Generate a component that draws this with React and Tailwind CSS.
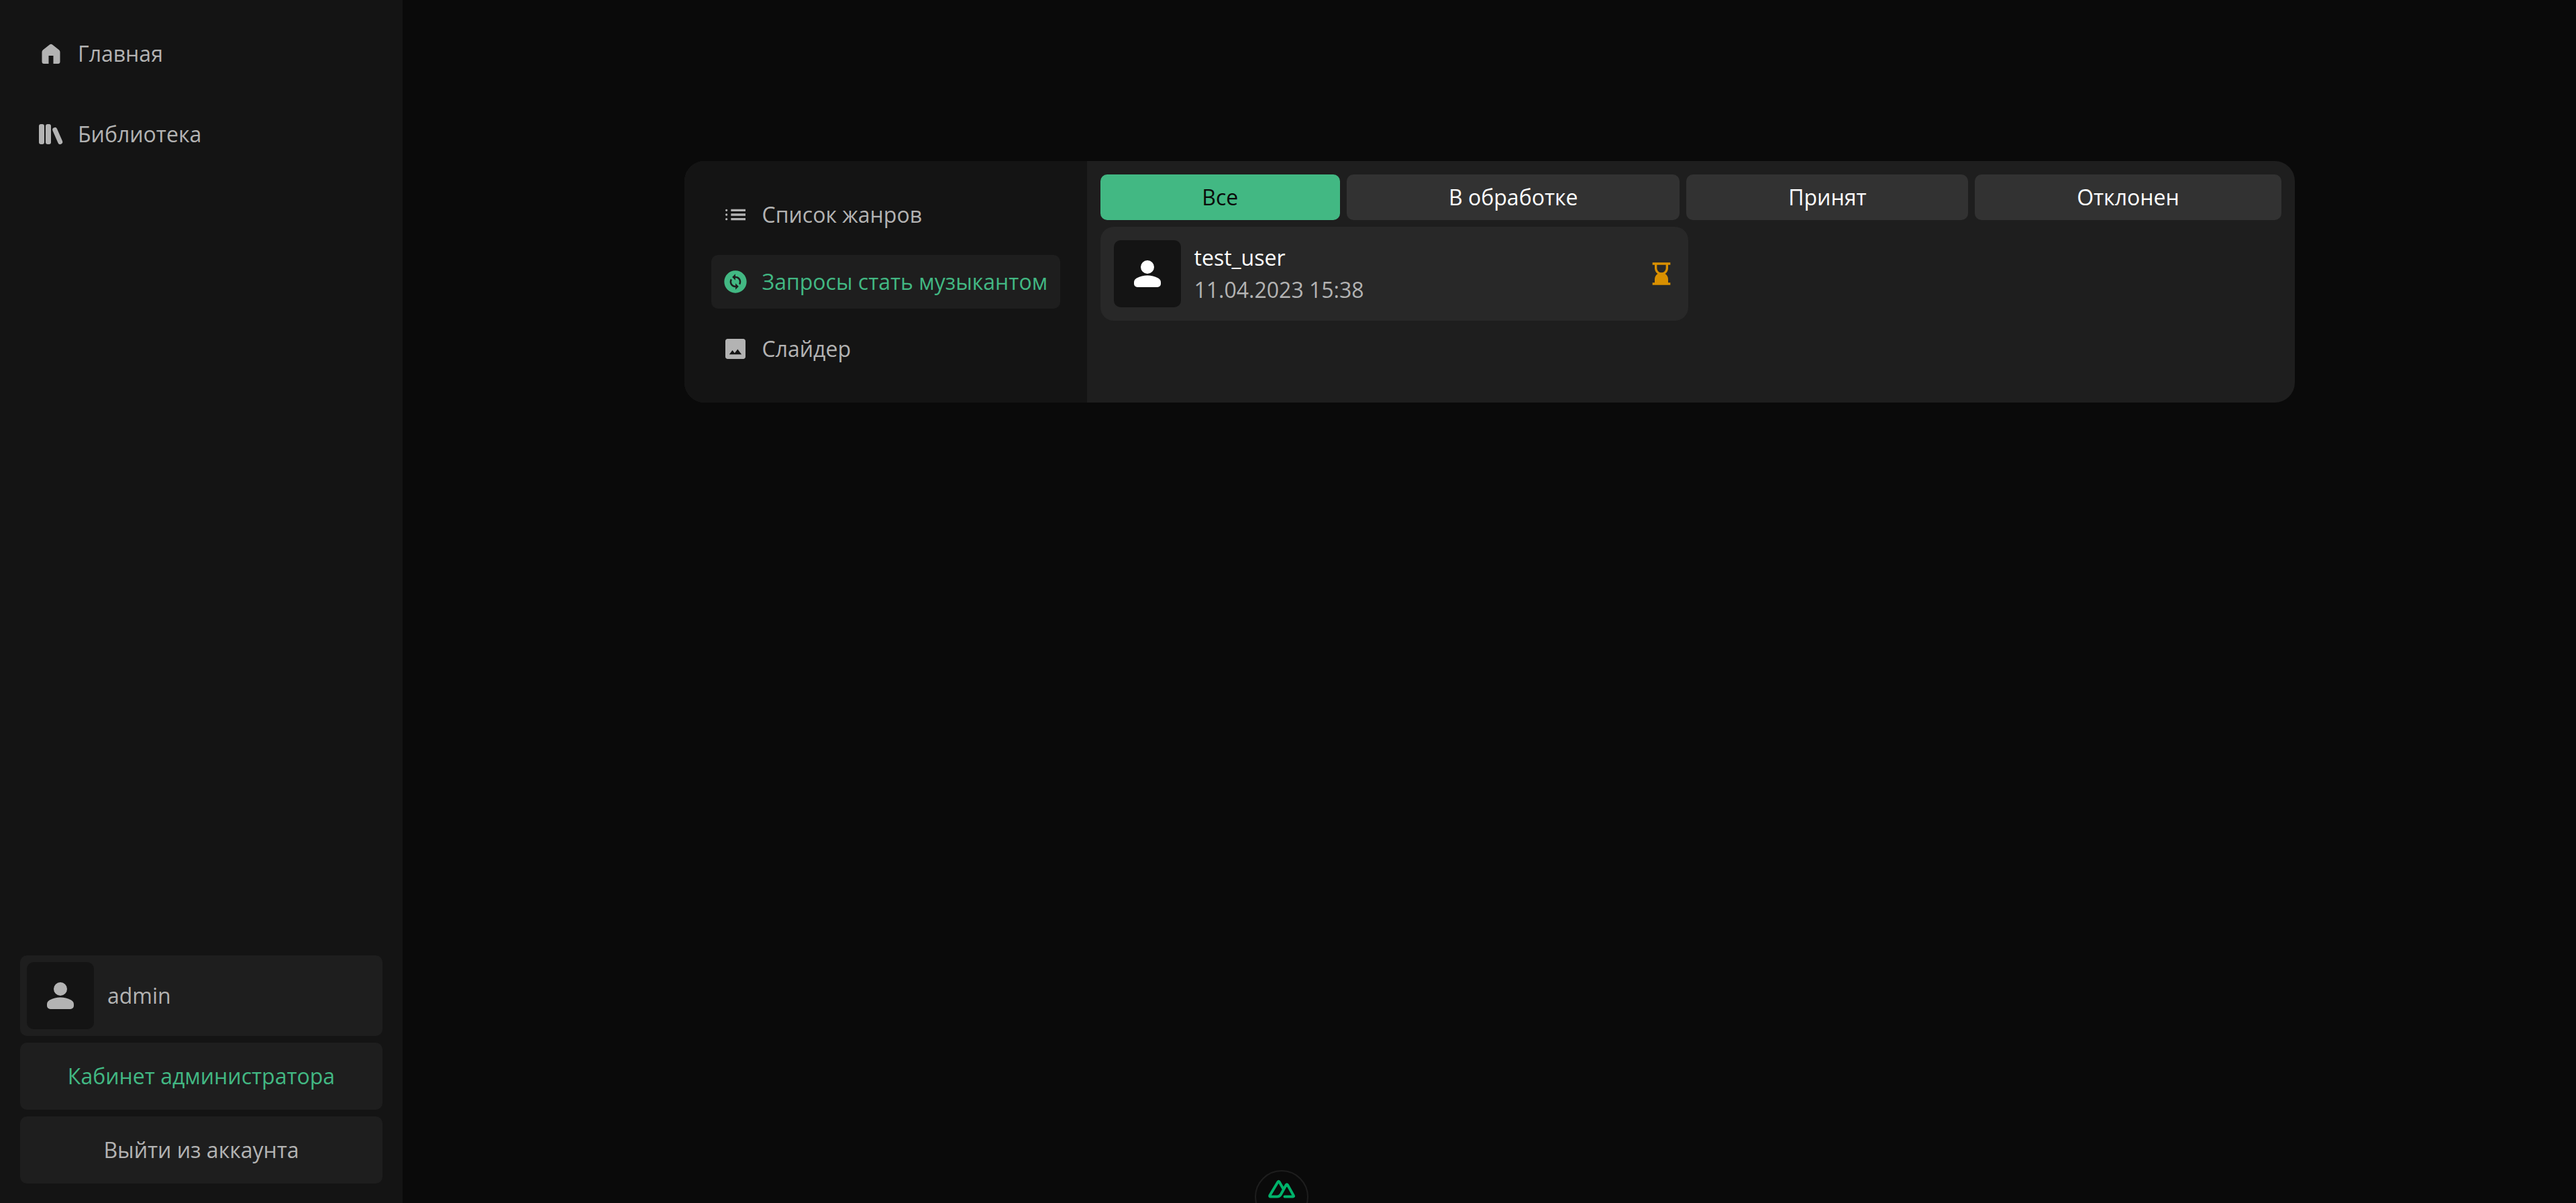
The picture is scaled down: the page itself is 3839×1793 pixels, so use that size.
import React from "react";

const Person = () => (
  <svg className="size-[60px]" viewBox="0 0 24 24" fill="currentColor" aria-hidden="true">
    <path d="M12 12q-1.650 0-2.825-1.175T8 8q0-1.650 1.175-2.825T12 4q1.650 0 2.825 1.175T16 8q0 1.650-1.175 2.825T12 12Zm-6 8q-.825 0-1.413-.588T4 18v-.8q0-.85.438-1.563T5.600 14.550q1.550-.775 3.150-1.163T12 13q1.650 0 3.250.388t3.150 1.162q.725.375 1.163 1.088T20 17.200v.8q0 .825-.588 1.413T18 20H6Z" />
  </svg>
);

const Home = () => (
  <svg className="size-10 shrink-0" viewBox="0 0 40 40" fill="currentColor" aria-hidden="true">
    <path d="M18 6.600a3.200 3.200 0 0 1 4 0l9.800 7.600a4 4 0 0 1 1.700 3.200V32a3 3 0 0 1-3 3h-7V23h-7v12h-7a3 3 0 0 1-3-3V17.400a4 4 0 0 1 1.700-3.200Z" />
  </svg>
);

const Library = () => (
  <svg className="size-10 shrink-0" viewBox="0 0 40 40" fill="currentColor" aria-hidden="true">
    <rect x="2" y="5" width="8" height="30" rx="3" />
    <rect x="12" y="5" width="8" height="30" rx="3" />
    <path d="M25.800 13.500 33.700 31.500" fill="none" stroke="currentColor" strokeWidth="7" strokeLinecap="round" />
  </svg>
);

const List = () => (
  <svg className="size-10 shrink-0" viewBox="0 0 24 24" fill="currentColor" aria-hidden="true">
    <path d="M8 9V7h13v2H8Zm0 4v-2h13v2H8Zm0 4v-2h13v2H8ZM4 9a1 1 0 1 1 0-2 1 1 0 0 1 0 2Zm0 4a1 1 0 1 1 0-2 1 1 0 0 1 0 2Zm0 4a1 1 0 1 1 0-2 1 1 0 0 1 0 2Z" />
  </svg>
);

const Change = () => (
  <svg className="size-10 shrink-0" viewBox="0 0 24 24" fill="currentColor" aria-hidden="true">
    <path d="M12 2C6.480 2 2 6.480 2 12s4.480 10 10 10 10-4.480 10-10S17.520 2 12 2zm.06 17v-2.010H12c-1.280 0-2.560-.49-3.540-1.460-1.710-1.710-1.920-4.350-.64-6.290l1.100 1.100c-.71 1.330-.53 3.010.59 4.130.7.700 1.620 1.030 2.540 1.010v-2.140l2.830 2.830L12.060 19zm4.110-4.240-1.100-1.100c.71-1.330.53-3.010-.59-4.130C13.790 8.840 12.900 8.500 12 8.500h-.06v2.150L9.110 7.830 11.940 5v2.020c1.300-.02 2.610.45 3.600 1.450 1.700 1.700 1.910 4.350.63 6.290z" />
  </svg>
);

const Picture = () => (
  <svg className="size-10 shrink-0" viewBox="0 0 24 24" fill="currentColor" aria-hidden="true">
    <path d="M5 21q-.825 0-1.413-.588T3 19V5q0-.825.588-1.413T5 3h14q.825 0 1.413.588T21 5v14q0 .825-.588 1.413T19 21H5Zm1.500-4h11l-3.500-4.700-2.700 3.400-2-2.500-2.800 3.800Z" />
  </svg>
);

const Hourglass = () => (
  <svg className="size-10 shrink-0 text-[#d99000]" viewBox="0 0 24 24" fill="currentColor" aria-hidden="true">
    <path d="M8 7q0 1.650 1.175 2.825T12 11q1.650 0 2.825-1.175T16 7V4H8v3ZM4 22v-2h2v-3q0-1.525.713-2.863T8.700 12q-1.275-.8-1.988-2.138T6 7V4H4V2h16v2h-2v3q0 1.525-.713 2.863T15.300 12q1.275.8 1.988 2.138T18 17v3h2v2H4Z" />
  </svg>
);

const navLinks = [
  { label: "Главная", Icon: Home },
  { label: "Библиотека", Icon: Library },
];

const sections = [
  { label: "Список жанров", Icon: List },
  { label: "Запросы стать музыкантом", Icon: Change, active: true },
  { label: "Слайдер", Icon: Picture },
];

const filters = ["Все", "В обработке", "Принят", "Отклонен"];

export default function App() {
  return (
    <div className="flex h-screen overflow-hidden bg-[#0a0a0a] font-['Open_Sans','Noto_Sans',sans-serif] text-[32px] leading-[44px] text-[#b3b3b3]">
      <aside className="flex w-[600px] shrink-0 flex-col justify-between bg-[#141414] px-[30px] pt-10 pb-[29px]">
        <nav className="flex flex-col gap-10">
          {navLinks.map(({ label, Icon }) => (
            <a key={label} href="#" className="flex h-20 items-center gap-5 px-[26px]">
              <Icon />
              {label}
            </a>
          ))}
        </nav>
        <div className="flex flex-col gap-[10px]">
          <a href="#" className="flex items-center gap-5 rounded-[10px] bg-[#1e1e1e] p-[10px]">
            <span className="flex size-[100px] items-center justify-center rounded-[10px] bg-[#141414]">
              <Person />
            </span>
            admin
          </a>
          <button type="button" className="h-[100px] rounded-[10px] bg-[#1e1e1e] text-[#42b883]">
            Кабинет администратора
          </button>
          <button type="button" className="h-[100px] rounded-[10px] bg-[#1e1e1e]">
            Выйти из аккаунта
          </button>
        </div>
      </aside>

      <main className="flex min-w-0 flex-1 items-start justify-center pt-60">
        <div className="flex w-full max-w-[2400px] overflow-hidden rounded-[30px] bg-[#1e1e1e]">
          <nav className="flex w-[600px] shrink-0 flex-col gap-5 bg-[#141414] p-10">
            {sections.map(({ label, Icon, active }) => (
              <a
                key={label}
                href="#"
                className={`flex h-20 items-center gap-5 rounded-[10px] px-4 whitespace-nowrap ${active ? "bg-[#1e1e1e] text-[#42b883]" : ""}`}
              >
                <Icon />
                {label}
              </a>
            ))}
          </nav>
          <section className="flex min-w-0 flex-1 flex-col gap-[10px] p-5">
            <div className="flex gap-[10px]">
              {filters.map((label, i) => (
                <button
                  key={label}
                  type="button"
                  className={`flex-auto rounded-[10px] px-5 py-3 ${i === 0 ? "bg-[#42b883] text-[#0a0a0a]" : "bg-[#323232] text-white"}`}
                >
                  {label}
                </button>
              ))}
            </div>
            <div className="grid grid-cols-2 gap-2">
              <article className="flex items-center gap-5 rounded-[20px] bg-[#282828] p-5">
                <span className="flex size-[100px] items-center justify-center rounded-[10px] bg-[#141414] text-white">
                  <Person />
                </span>
                <div className="flex flex-1 flex-col gap-1">
                  <p className="text-white">test_user</p>
                  <time dateTime="2023-04-11T15:38">11.04.2023 15:38</time>
                </div>
                <Hourglass />
              </article>
            </div>
          </section>
        </div>
      </main>

      <button
        type="button"
        aria-label="Nuxt DevTools"
        className="fixed -bottom-[31px] left-1/2 -ml-[50px] flex size-20 items-center justify-center rounded-full border-2 border-[#1e1e1e] bg-[#0a0a0a] pb-6"
      >
        <svg className="h-7 w-10" viewBox="0 0 40 28" fill="none" stroke="#00b36b" strokeWidth="4" strokeLinejoin="round" strokeLinecap="round" aria-hidden="true">
          <path d="M24.500 25.500H37q1.500 0 .8-1.500L29 8.200q-1.200-1.700-2.400 0L19 22q-2 3.500-5.500 3.500H3.500q-2 0-1-2L14.500 3.500q1-1.500 2 0l6 10.500" />
        </svg>
      </button>
    </div>
  );
}
